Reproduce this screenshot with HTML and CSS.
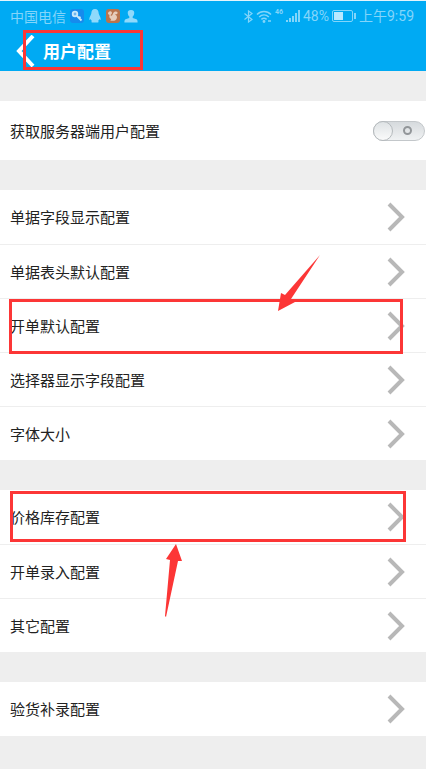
FILE: index.html
```html
<!DOCTYPE html>
<html lang="zh-CN">
<head>
<meta charset="utf-8">
<meta name="viewport" content="width=device-width, initial-scale=1">
<title>用户配置</title>
<link rel="stylesheet" href="styles.css">
</head>
<body>
<header class="top">
  <div class="status">
    <span>中国电信</span>
    <svg class="app" width="14" height="14" viewBox="0 0 14 14" aria-hidden="true"><rect width="14" height="14" rx="3" fill="#168bed"/><circle cx="5" cy="5" r="2.3" fill="#6fb4ee" stroke="#c9e8fb" stroke-width="1.8"/><path d="M7 7l4.500 4.500M9 9l1.500-1.200" stroke="#c9e8fb" stroke-width="1.8"/></svg>
    <svg class="app" width="14" height="14" viewBox="0 0 14 14" aria-hidden="true"><path d="M7 0C4.500 0 3.300 2 3.300 4.500C3 6 1.300 8 1.300 10.500C1.600 11.500 2.300 10.600 2.700 10C3 11 3.300 11.500 4 12C2.500 13 3.500 14 7 13.400C10.500 14 11.500 13 10 12C10.700 11.500 11 11 11.300 10C11.700 10.600 12.400 11.500 12.700 10.500C12.700 8 11 6 10.700 4.500C10.700 2 9.500 0 7 0Z" fill="#8fd9fb"/></svg>
    <svg class="app" width="14" height="14" viewBox="0 0 14 14" aria-hidden="true"><rect width="14" height="14" rx="3" fill="#b9744d"/><path d="M2 5C2 3 3.500 2 5 2.500C6.500 3 6 5 5 5.500C4 6.500 5 7 6 6.500C7 5.500 7 3 9 2.500C11.500 2 12.500 4 11 5C10 5.500 9.500 5 9 5.500C11 6.500 11.500 8 10.500 10C9.500 12 7 12 4 11.500C5 11 5.300 10.500 5 10C3.500 9 3 8 3.500 6Z" fill="#e6cdbb"/></svg>
    <svg class="app" width="14" height="14" viewBox="0 0 14 14" aria-hidden="true"><path d="M7 1C4.300 1 3.500 2.500 3.800 4.500C4 6 4.700 7 5.300 7.500V9L1.500 10.300C.6 10.800 .4 12 .4 13.500H13.600C13.600 12 13.400 10.800 12.500 10.300L8.700 9V7.500C9.300 7 10 6 10.200 4.500C10.500 2.500 9.700 1 7 1Z" fill="#8fd9fb"/></svg>
    <span class="signals">
      <svg width="9" height="13" viewBox="0 0 9 13" fill="none" stroke="currentColor" aria-hidden="true"><path d="M.5 3.500L8 9.500L4.500 12V1L8 3.500L.5 9.500" stroke-width="1.200"/></svg>
      <svg class="wifi" width="16" height="13" viewBox="0 0 16 13" fill="none" stroke="currentColor" stroke-width="1.500" aria-hidden="true"><path d="M1 4.500C5 .4 11 .4 15 4.500M3.200 7C6 4.300 10 4.300 12.800 7M5.400 9.400C7 8 9 8 10.600 9.400"/><circle cx="8" cy="11.500" r=".7"/><path d="M12 11h3"/></svg>
      <span class="net">46</span>
      <svg width="14" height="13" viewBox="0 0 14 13" fill="currentColor" aria-hidden="true"><path d="M0 10h2v2H0zM3 8h2v4H3zM6 6h2v6H6zM9 3h2v9H9zM12 0h2v12h-2z"/></svg>
      <span class="percent">48%</span>
      <svg class="battery" width="24" height="12" viewBox="0 0 24 12" aria-hidden="true"><rect x=".5" y=".5" width="20" height="11" rx="1.500" fill="none" stroke="currentColor"/><path d="M2 2h9v8H2z" fill="#b9e8ff"/><path d="M22 3h2v6h-2z" fill="currentColor"/></svg>
      <span>上午9:59</span>
    </span>
  </div>
  <div class="bar">
    <button class="back" type="button" aria-label="返回"><svg width="20" height="32" viewBox="0 0 20 32" fill="none" stroke="#fff" stroke-width="4" aria-hidden="true"><path d="M18 1L4 16L18 31"/></svg></button>
    <h1>用户配置</h1>
    <span class="mark mark-title"></span>
  </div>
</header>
<main>
  <section class="group">
    <div class="row row-switch"><label for="sync">获取服务器端用户配置</label><input class="switch" id="sync" type="checkbox" role="switch"></div>
  </section>
  <nav class="group">
    <a class="row" href="#fields">单据字段显示配置<svg class="chevron" viewBox="0 0 18 30" aria-hidden="true"><path d="M2 2L15 15L2 28"/></svg></a>
    <a class="row" href="#head">单据表头默认配置<svg class="chevron" viewBox="0 0 18 30" aria-hidden="true"><path d="M2 2L15 15L2 28"/></svg></a>
    <a class="row" href="#billing">开单默认配置<svg class="chevron" viewBox="0 0 18 30" aria-hidden="true"><path d="M2 2L15 15L2 28"/></svg>
      <span class="mark mark-billing"></span>
      <svg class="arrow arrow-down" width="44" height="58" viewBox="0 0 44 58" aria-hidden="true"><path d="M43 0L14 44L18 47L1 56L4 38L8 40Z"/></svg>
    </a>
    <a class="row" href="#picker">选择器显示字段配置<svg class="chevron" viewBox="0 0 18 30" aria-hidden="true"><path d="M2 2L15 15L2 28"/></svg></a>
    <a class="row" href="#font">字体大小<svg class="chevron" viewBox="0 0 18 30" aria-hidden="true"><path d="M2 2L15 15L2 28"/></svg></a>
  </nav>
  <nav class="group">
    <a class="row" href="#stock">价格库存配置<svg class="chevron" viewBox="0 0 18 30" aria-hidden="true"><path d="M2 2L15 15L2 28"/></svg>
      <span class="mark mark-stock"></span>
      <svg class="arrow arrow-up" width="18" height="75" viewBox="0 0 18 75" aria-hidden="true"><path d="M11 1L17 18L13 18L1 74L0 73L5 17L1 16Z"/></svg>
    </a>
    <a class="row" href="#entry">开单录入配置<svg class="chevron" viewBox="0 0 18 30" aria-hidden="true"><path d="M2 2L15 15L2 28"/></svg></a>
    <a class="row" href="#other">其它配置<svg class="chevron" viewBox="0 0 18 30" aria-hidden="true"><path d="M2 2L15 15L2 28"/></svg></a>
  </nav>
  <nav class="group">
    <a class="row" href="#inspect">验货补录配置<svg class="chevron" viewBox="0 0 18 30" aria-hidden="true"><path d="M2 2L15 15L2 28"/></svg></a>
  </nav>
</main>
</body>
</html>
```
FILE: styles.css
```css
* { box-sizing: border-box; }
body {
  margin: 0;
  background: #eee;
  color: #222;
  font: 15px/20px "Noto Sans CJK SC", sans-serif;
}
svg { flex: none; display: block; }

.top {
  background: #00aaf3;
  border-top: 1px solid #e4f4fc;
}
.status {
  display: flex;
  align-items: center;
  gap: 4px;
  height: 30px;
  padding: 0 12px 0 10px;
  color: #83d5fa;
  font-size: 14px;
  white-space: nowrap;
}
.signals {
  display: flex;
  align-items: center;
  gap: 3px;
  margin-left: auto;
  font-family: Roboto, "Noto Sans CJK SC", sans-serif;
}
.net {
  align-self: flex-start;
  font-size: 7px;
  font-weight: 700;
  line-height: 12px;
}
.bar {
  position: relative;
  display: flex;
  align-items: center;
  gap: 8px;
  height: 40px;
  padding-left: 15px;
}
.back {
  padding: 0;
  border: 0;
  background: none;
  cursor: pointer;
}
h1 {
  margin: 0;
  color: #fff;
  font-size: 17px;
  font-weight: 700;
  line-height: 24px;
}

main {
  display: flex;
  flex-direction: column;
  gap: 30px;
  padding: 30px 0;
}
.group { background: #fff; }
.row {
  position: relative;
  display: flex;
  align-items: center;
  justify-content: space-between;
  min-height: 54px;
  padding: 0 21px 0 10px;
  color: inherit;
  text-decoration: none;
}
.row + .row { border-top: 1px solid #eee; }
.row-switch {
  min-height: 59px;
  padding-right: 1px;
}
.chevron {
  width: 18px;
  height: 30px;
  fill: none;
  stroke: #b8b8b8;
  stroke-width: 4;
}

.switch {
  appearance: none;
  position: relative;
  width: 52px;
  height: 20px;
  margin: 0;
  border: 1px solid #c3c7ca;
  border-radius: 10px;
  background: linear-gradient(#d6dadd, #f0f2f3);
  cursor: pointer;
}
.switch::before {
  content: "";
  position: absolute;
  top: -1px;
  left: -1px;
  width: 20px;
  height: 20px;
  border: 1px solid #b5babd;
  border-radius: 50%;
  background: linear-gradient(#dfe3e5, #fafafa);
}
.switch::after {
  content: "";
  position: absolute;
  box-sizing: border-box;
  top: 4px;
  right: 12px;
  width: 9px;
  height: 9px;
  border: 2px solid #929699;
  border-radius: 50%;
}
.switch::before { box-sizing: border-box; }
.switch:checked::before { left: 31px; }
.switch:checked::after { right: 30px; }

.mark {
  position: absolute;
  z-index: 1;
  border: 3px solid #fc3636;
  pointer-events: none;
}
.mark-title { left: 23px; top: -1px; width: 120px; height: 40px; }
.mark-billing { left: 9px; right: 23px; top: 0; height: 55px; }
.mark-stock { left: 10px; right: 20px; top: 1px; height: 51px; }
.arrow {
  position: absolute;
  z-index: 2;
  fill: #fc3636;
  pointer-events: none;
}
.arrow-down { left: 277px; top: -44px; }
.arrow-up { left: 165px; top: 53px; }
```
